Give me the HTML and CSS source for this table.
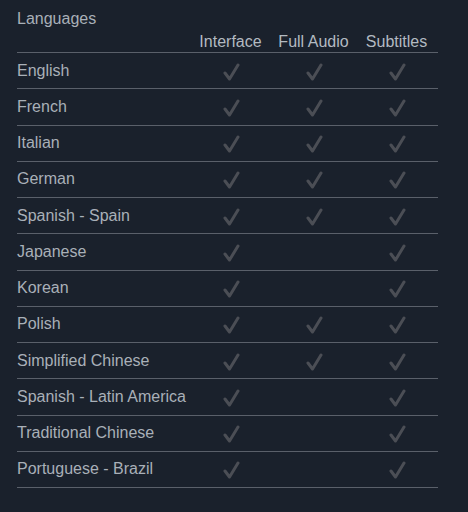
FILE: index.html
```html
<!DOCTYPE html>
<html>
<head>
<meta charset="utf-8">
<link rel="stylesheet" href="styles.css">
</head>
<body>
<div class="panel">
  <div class="title">Languages</div>
  <div class="table">
    <div class="row head"><div></div><div class="c">Interface</div><div class="c">Full Audio</div><div class="c">Subtitles</div></div>
    <div class="row"><div class="lang">English</div><div class="c"><svg class="chk" viewBox="0 0 18 18"><path d="M3 10 L7.5 16 L16 2"/></svg></div><div class="c"><svg class="chk" viewBox="0 0 18 18"><path d="M3 10 L7.5 16 L16 2"/></svg></div><div class="c"><svg class="chk" viewBox="0 0 18 18"><path d="M3 10 L7.5 16 L16 2"/></svg></div></div>
    <div class="row"><div class="lang">French</div><div class="c"><svg class="chk" viewBox="0 0 18 18"><path d="M3 10 L7.5 16 L16 2"/></svg></div><div class="c"><svg class="chk" viewBox="0 0 18 18"><path d="M3 10 L7.5 16 L16 2"/></svg></div><div class="c"><svg class="chk" viewBox="0 0 18 18"><path d="M3 10 L7.5 16 L16 2"/></svg></div></div>
    <div class="row"><div class="lang">Italian</div><div class="c"><svg class="chk" viewBox="0 0 18 18"><path d="M3 10 L7.5 16 L16 2"/></svg></div><div class="c"><svg class="chk" viewBox="0 0 18 18"><path d="M3 10 L7.5 16 L16 2"/></svg></div><div class="c"><svg class="chk" viewBox="0 0 18 18"><path d="M3 10 L7.5 16 L16 2"/></svg></div></div>
    <div class="row"><div class="lang">German</div><div class="c"><svg class="chk" viewBox="0 0 18 18"><path d="M3 10 L7.5 16 L16 2"/></svg></div><div class="c"><svg class="chk" viewBox="0 0 18 18"><path d="M3 10 L7.5 16 L16 2"/></svg></div><div class="c"><svg class="chk" viewBox="0 0 18 18"><path d="M3 10 L7.5 16 L16 2"/></svg></div></div>
    <div class="row"><div class="lang">Spanish - Spain</div><div class="c"><svg class="chk" viewBox="0 0 18 18"><path d="M3 10 L7.5 16 L16 2"/></svg></div><div class="c"><svg class="chk" viewBox="0 0 18 18"><path d="M3 10 L7.5 16 L16 2"/></svg></div><div class="c"><svg class="chk" viewBox="0 0 18 18"><path d="M3 10 L7.5 16 L16 2"/></svg></div></div>
    <div class="row"><div class="lang">Japanese</div><div class="c"><svg class="chk" viewBox="0 0 18 18"><path d="M3 10 L7.5 16 L16 2"/></svg></div><div class="c"></div><div class="c"><svg class="chk" viewBox="0 0 18 18"><path d="M3 10 L7.5 16 L16 2"/></svg></div></div>
    <div class="row"><div class="lang">Korean</div><div class="c"><svg class="chk" viewBox="0 0 18 18"><path d="M3 10 L7.5 16 L16 2"/></svg></div><div class="c"></div><div class="c"><svg class="chk" viewBox="0 0 18 18"><path d="M3 10 L7.5 16 L16 2"/></svg></div></div>
    <div class="row"><div class="lang">Polish</div><div class="c"><svg class="chk" viewBox="0 0 18 18"><path d="M3 10 L7.5 16 L16 2"/></svg></div><div class="c"><svg class="chk" viewBox="0 0 18 18"><path d="M3 10 L7.5 16 L16 2"/></svg></div><div class="c"><svg class="chk" viewBox="0 0 18 18"><path d="M3 10 L7.5 16 L16 2"/></svg></div></div>
    <div class="row"><div class="lang">Simplified Chinese</div><div class="c"><svg class="chk" viewBox="0 0 18 18"><path d="M3 10 L7.5 16 L16 2"/></svg></div><div class="c"><svg class="chk" viewBox="0 0 18 18"><path d="M3 10 L7.5 16 L16 2"/></svg></div><div class="c"><svg class="chk" viewBox="0 0 18 18"><path d="M3 10 L7.5 16 L16 2"/></svg></div></div>
    <div class="row"><div class="lang">Spanish - Latin America</div><div class="c"><svg class="chk" viewBox="0 0 18 18"><path d="M3 10 L7.5 16 L16 2"/></svg></div><div class="c"></div><div class="c"><svg class="chk" viewBox="0 0 18 18"><path d="M3 10 L7.5 16 L16 2"/></svg></div></div>
    <div class="row"><div class="lang">Traditional Chinese</div><div class="c"><svg class="chk" viewBox="0 0 18 18"><path d="M3 10 L7.5 16 L16 2"/></svg></div><div class="c"></div><div class="c"><svg class="chk" viewBox="0 0 18 18"><path d="M3 10 L7.5 16 L16 2"/></svg></div></div>
    <div class="row"><div class="lang">Portuguese - Brazil</div><div class="c"><svg class="chk" viewBox="0 0 18 18"><path d="M3 10 L7.5 16 L16 2"/></svg></div><div class="c"></div><div class="c"><svg class="chk" viewBox="0 0 18 18"><path d="M3 10 L7.5 16 L16 2"/></svg></div></div>
  </div>
</div>
</body>
</html>
```
FILE: styles.css
```css
html, body {
  margin: 0;
  padding: 0;
  background: #1a212c;
}
body {
  font-family: "Liberation Sans", Arial, sans-serif;
  font-size: 16px;
  color: #a9b0b8;
}
.panel {
  width: 421px;
  padding: 10px 0 0 17px;
}
.title {
  line-height: 18px;
}
.row {
  display: grid;
  grid-template-columns: 1fr 83px 83px 83px;
  align-items: center;
  height: 35.25px;
  border-bottom: 1px solid #5a606a;
}
.row.head {
  align-items: end;
  line-height: 18px;
  padding-bottom: 1px;
  box-sizing: border-box;
  height: 25px;
  color: #b3bac1;
}
.c {
  display: flex;
  justify-content: center;
  align-items: center;
}
.row.head .c {
  display: block;
  text-align: center;
}
.lang {
  line-height: 18px;
}
.chk {
  width: 18px;
  height: 18px;
  margin-top: 2px;
}
.chk path {
  fill: none;
  stroke: #4b4e55;
  stroke-width: 3;
  stroke-linecap: round;
  stroke-linejoin: round;
}
```
